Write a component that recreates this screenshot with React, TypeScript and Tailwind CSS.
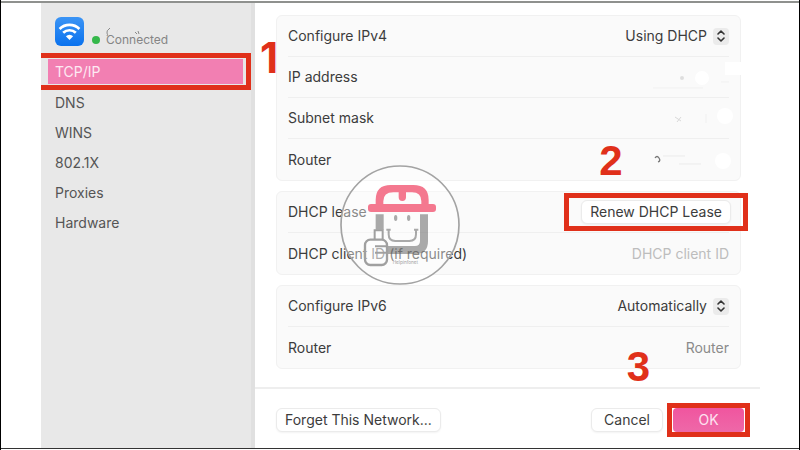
import type { ReactNode } from 'react'

const tabs = ['TCP/IP', 'DNS', 'WINS', '802.1X', 'Proxies', 'Hardware']

function WifiBadge() {
  return (
    <svg viewBox="0 0 29 29" className="size-[29px] shrink-0" aria-hidden="true">
      <defs>
        <linearGradient id="wifi" x1="0" y1="0" x2="0" y2="1">
          <stop offset="0" stopColor="#3b94f5" />
          <stop offset="1" stopColor="#0a72ee" />
        </linearGradient>
      </defs>
      <rect width="29" height="29" rx="6" fill="url(#wifi)" />
      <g fill="none" stroke="#fff" strokeWidth="2.7">
        <path d="M4.6 12a14 14 0 0 1 19.8 0" />
        <path d="M8.2 15.8a9 9 0 0 1 12.6 0" />
      </g>
      <path d="M14.5 23l-3.6-3.8a5 5 0 0 1 7.2 0z" fill="#fff" />
    </svg>
  )
}

function Card({ children }: { children: ReactNode }) {
  return (
    <section className="divide-y divide-[#efefef] rounded-md border border-[#f1f1f1] bg-[#fafafa] px-[11px]">
      {children}
    </section>
  )
}

function Row({ label, htmlFor, children }: { label: string; htmlFor?: string; children?: ReactNode }) {
  return (
    <div className="flex h-[41px] items-center justify-between">
      {htmlFor ? <label htmlFor={htmlFor}>{label}</label> : <span>{label}</span>}
      {children}
    </div>
  )
}

function Picker({ id, value }: { id: string; value: string }) {
  return (
    <div className="relative flex items-center">
      <select id={id} className="appearance-none bg-transparent pr-[22px] text-right outline-none">
        <option>{value}</option>
      </select>
      <span className="pointer-events-none absolute right-0 flex h-[17px] w-4 items-center justify-center rounded bg-[#ebebeb]">
        <svg viewBox="0 0 8 12" className="h-3 w-2" fill="none" stroke="#333" strokeWidth="1.6" strokeLinecap="round" strokeLinejoin="round">
          <path d="M1 4l3-3 3 3M1 8l3 3 3-3" />
        </svg>
      </span>
    </div>
  )
}

// erased value: what is left of it after the white brush
function Erased({ children }: { children: ReactNode }) {
  return (
    <svg viewBox="0 0 96 30" className="h-[30px] w-24 overflow-visible" aria-hidden="true">
      {children}
    </svg>
  )
}

function Mascot() {
  return (
    <svg viewBox="0 0 420 420" className="pointer-events-none absolute top-1/2 left-1/2 size-[140px] -translate-1/2" aria-hidden="true">
      <circle cx="210" cy="210" r="177" fill="#fff" fillOpacity="0.4" stroke="#a3a3a3" strokeWidth="5" />
      <g fill="none" stroke="#555" strokeOpacity="0.5">
        <path d="M149 178v46M282 178v80q0 27-27 27h-82" strokeWidth="24" />
        <path d="M176 224v14q0 20 20 20h42q20 0 20-20v-14M169 224h13M252 224h13" strokeWidth="6" />
      </g>
      <path d="M134 254v-28h24v28" fill="#fff" fillOpacity="0.6" stroke="#a0a0a0" strokeWidth="6" />
      <rect x="105" y="254" width="66" height="76" rx="16" fill="#fff" fillOpacity="0.3" stroke="#a0a0a0" strokeWidth="7" />
      <path d="M135 274h34M135 293h34" fill="none" stroke="#a0a0a0" strokeWidth="6" />
      <ellipse cx="197" cy="189" rx="5" ry="9" fill="#aaa" />
      <ellipse cx="236" cy="189" rx="5" ry="9" fill="#aaa" />
      <g fill="#f4788f">
        <path fillRule="evenodd" d="M137 149v-14q0-45 45-45h68q46 0 46 45v14zM160 147h114v-8q0-27-28-27h-18v15q0 11-11 11t-11-11v-15h-16q-30 0-30 27z" />
        <rect x="114" y="147" width="204" height="24" rx="9" />
      </g>
      <text x="188" y="326" fontSize="14" fill="#a3a3a3" fontFamily="Inter, sans-serif">Helpinfonet</text>
    </svg>
  )
}

const callout = 'pointer-events-none absolute text-[42px] leading-none font-bold text-[#e0301a]'
const button = 'h-6 rounded-md border border-[#ebebeb] bg-white px-2 shadow-xs'

export default function App() {
  return (
    <div className="relative flex min-h-screen flex-col border-x border-black bg-white pt-px pb-px font-['Inter',sans-serif] text-sm text-[#3c3c3c]">
      <div className="flex flex-1 border-t-2 border-b border-t-[#8f918e] border-b-[#333] pr-[39px] pl-10">
        <aside className="w-[214px] shrink-0 border-r-4 border-[#e0e0e0] bg-[#e8e8e8] pt-3.5 text-[#555]">
          <header className="flex pl-3.5">
            <WifiBadge />
            <p className="relative mt-[15px] ml-2 flex items-center gap-1.5 text-xs text-[#858585]">
              <span className="size-2 rounded-full bg-[#35b84b]" />
              Connected
              <svg viewBox="0 0 40 12" className="absolute -top-1 left-3.5 h-3 w-10" fill="none" stroke="#8a8a8a" strokeWidth="1" aria-hidden="true">
                <path d="M4 0q-4 3-3 5t0 3M29 4l2 2M32 3l1 3" />
              </svg>
            </p>
          </header>
          <nav className="mt-[5px]">
            {tabs.map((tab, i) =>
              i === 0 ? (
                <div key={tab} className="relative -mb-0.5 border-[5px] border-l-0 border-[#e0301a] py-px pr-[3px] pl-[7px]">
                  <a href="#tcp-ip" aria-current="page" className="block bg-[#f27fb2] pl-[7px] leading-[25px] text-[#fdeaf3]">
                    {tab}
                  </a>
                  <span className={`${callout} bottom-1.5 left-full ml-3.5`}>1</span>
                </div>
              ) : (
                <a key={tab} href={'#' + tab.toLowerCase()} className="block pl-3.5 leading-[30px]">
                  {tab}
                </a>
              ),
            )}
          </nav>
        </aside>

        <main className="flex flex-1 flex-col">
          <div className="flex flex-col gap-2.5 pt-3 pr-[19px] pb-[18px] pl-[21px]">
            <Card>
              <Row label="Configure IPv4" htmlFor="ipv4">
                <Picker id="ipv4" value="Using DHCP" />
              </Row>
              <Row label="IP address">
                <Erased>
                  <circle cx="49" cy="16" r="2" fill="#dedede" />
                  <circle cx="69" cy="16" r="7" fill="#fff" />
                  <path d="M92 0h20v13H92z" fill="#fff" />
                  <path d="M20 26h50M88 20h8" stroke="#f1f1f1" />
                </Erased>
              </Row>
              <Row label="Subnet mask">
                <Erased>
                  <path d="M42 14l6 4M48 14l-4 5" stroke="#d9d9d9" />
                  <circle cx="92" cy="13" r="8" fill="#fff" />
                  <path d="M73 11v9" stroke="#f0f0f0" />
                </Erased>
              </Row>
              <Row label="Router">
                <Erased>
                  <path d="M22 13q2-3 4 0t-1 4" fill="none" stroke="#777" strokeWidth="1.3" />
                  <path d="M30 11h22M46 19h22" stroke="#ebebeb" />
                  <circle cx="90" cy="16" r="8" fill="#fff" />
                </Erased>
              </Row>
            </Card>
            <Card>
              <Row label="DHCP lease">
                <div className="relative -mr-[19px] border-[5px] border-[#e0301a] px-3 py-0.5">
                  <button type="button" className={button}>Renew DHCP Lease</button>
                  <span className={`${callout} bottom-full left-[30px] mb-4 font-['Liberation_Sans',sans-serif]`}>2</span>
                </div>
              </Row>
              <Row label="DHCP client ID (if required)" htmlFor="client">
                <input id="client" placeholder="DHCP client ID" className="w-40 text-right outline-none placeholder:text-[#bdbdbd]" />
              </Row>
            </Card>
            <Card>
              <Row label="Configure IPv6" htmlFor="ipv6">
                <Picker id="ipv6" value="Automatically" />
              </Row>
              <Row label="Router" htmlFor="router6">
                <input id="router6" placeholder="Router" className="w-40 text-right outline-none placeholder:text-[#8a8a8a]" />
              </Row>
            </Card>
          </div>
          <footer className="flex flex-1 items-center border-t-2 border-[#eee] pt-0.5 pr-2.5 pl-[21px]">
            <button type="button" className={button}>Forget This Network...</button>
            <button type="button" className={`${button} ml-auto px-3`}>Cancel</button>
            <div className="relative ml-1 border-[5px] border-[#e0301a] px-px">
              <button type="button" className="h-6 w-[71px] rounded bg-linear-to-b from-[#f0559f] to-[#ee68a8] text-[#fde3f0]">OK</button>
              <span className={`${callout} right-full bottom-full mr-[22px] mb-5 font-['Liberation_Sans',sans-serif]`}>3</span>
            </div>
          </footer>
        </main>
      </div>
      <Mascot />
    </div>
  )
}
